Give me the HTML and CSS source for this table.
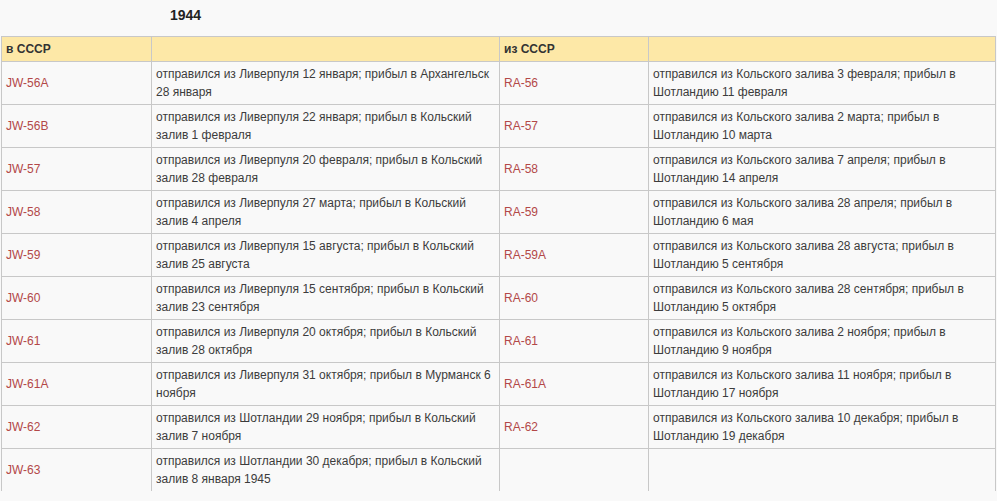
FILE: index.html
```html
<!DOCTYPE html>
<html lang="ru">
<head>
<meta charset="utf-8">
<link rel="stylesheet" href="styles.css">
</head>
<body>
<div class="frame">
  <div class="title">1944</div>
  <table class="convoys">
    <colgroup>
      <col class="c1"><col class="c2"><col class="c3"><col class="c4">
    </colgroup>
    <thead>
      <tr><th>в СССР</th><th></th><th>из СССР</th><th></th></tr>
    </thead>
    <tbody>
      <tr><td><a href="#">JW-56A</a></td><td>отправился из Ливерпуля 12 января; прибыл в Архангельск 28 января</td><td><a href="#">RA-56</a></td><td>отправился из Кольского залива 3 февраля; прибыл в Шотландию 11 февраля</td></tr>
      <tr><td><a href="#">JW-56B</a></td><td>отправился из Ливерпуля 22 января; прибыл в Кольский залив 1 февраля</td><td><a href="#">RA-57</a></td><td>отправился из Кольского залива 2 марта; прибыл в Шотландию 10 марта</td></tr>
      <tr><td><a href="#">JW-57</a></td><td>отправился из Ливерпуля 20 февраля; прибыл в Кольский залив 28 февраля</td><td><a href="#">RA-58</a></td><td>отправился из Кольского залива 7 апреля; прибыл в Шотландию 14 апреля</td></tr>
      <tr><td><a href="#">JW-58</a></td><td>отправился из Ливерпуля 27 марта; прибыл в Кольский залив 4 апреля</td><td><a href="#">RA-59</a></td><td>отправился из Кольского залива 28 апреля; прибыл в Шотландию 6 мая</td></tr>
      <tr><td><a href="#">JW-59</a></td><td>отправился из Ливерпуля 15 августа; прибыл в Кольский залив 25 августа</td><td><a href="#">RA-59A</a></td><td>отправился из Кольского залива 28 августа; прибыл в Шотландию 5 сентября</td></tr>
      <tr><td><a href="#">JW-60</a></td><td>отправился из Ливерпуля 15 сентября; прибыл в Кольский залив 23 сентября</td><td><a href="#">RA-60</a></td><td>отправился из Кольского залива 28 сентября; прибыл в Шотландию 5 октября</td></tr>
      <tr><td><a href="#">JW-61</a></td><td>отправился из Ливерпуля 20 октября; прибыл в Кольский залив 28 октября</td><td><a href="#">RA-61</a></td><td>отправился из Кольского залива 2 ноября; прибыл в Шотландию 9 ноября</td></tr>
      <tr><td><a href="#">JW-61A</a></td><td>отправился из Ливерпуля 31 октября; прибыл в Мурманск 6 ноября</td><td><a href="#">RA-61A</a></td><td>отправился из Кольского залива 11 ноября; прибыл в Шотландию 17 ноября</td></tr>
      <tr><td><a href="#">JW-62</a></td><td>отправился из Шотландии 29 ноября; прибыл в Кольский залив 7 ноября</td><td><a href="#">RA-62</a></td><td>отправился из Кольского залива 10 декабря; прибыл в Шотландию 19 декабря</td></tr>
      <tr><td><a href="#">JW-63</a></td><td>отправился из Шотландии 30 декабря; прибыл в Кольский залив 8 января 1945</td><td></td><td></td></tr>
    </tbody>
  </table>
</div>
</body>
</html>
```

FILE: styles.css
```css
html, body {
  margin: 0;
  padding: 0;
  background: #f9f9f9;
}

.frame {
  height: 491px;
  overflow: hidden;
  font-family: "Liberation Sans", Arial, sans-serif;
  font-size: 12px;
  color: #3c3c3c;
}

.title {
  font-weight: bold;
  font-size: 14px;
  line-height: 16px;
  color: #222;
  padding: 7px 0 0 170px;
  height: 29px;
}

.convoys {
  border-collapse: collapse;
  width: 994px;
  margin-left: 1px;
  table-layout: fixed;
  background: #f9f9f9;
}

.c1 { width: 150px; }
.c2 { width: 348px; }
.c3 { width: 149px; }
.c4 { width: 347px; }

.convoys th,
.convoys td {
  border: 1px solid #c8c8c8;
  padding: 3px 3px 3px 4px;
  line-height: 18px;
  text-align: left;
  vertical-align: middle;
}

.convoys th {
  background: #fde8a7;
  font-weight: bold;
  color: #333;
  height: 18px;
}

.convoys td {
  height: 36px;
}

.convoys a {
  color: #b34848;
  text-decoration: none;
}
```
